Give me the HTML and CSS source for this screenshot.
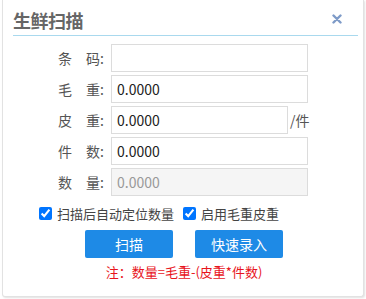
FILE: index.html
```html
<!DOCTYPE html>
<html lang="zh-CN">
<head>
<meta charset="utf-8">
<title>生鲜扫描</title>
<link rel="stylesheet" href="styles.css">
</head>
<body>
<div class="dialog">
  <div class="header">
    <span class="title">生鲜扫描</span>
    <svg class="close" width="10" height="10" viewBox="0 0 10 10"><path d="M1.5 1.5 L8.5 8.5 M8.5 1.5 L1.5 8.5" stroke="#7e9bc8" stroke-width="2.4" stroke-linecap="round"/></svg>
  </div>
  <div class="form">
    <div class="row"><label class="lbl">条&emsp;码:</label><input class="inp" type="text" value=""></div>
    <div class="row"><label class="lbl">毛&emsp;重:</label><input class="inp" type="text" value="0.0000"></div>
    <div class="row"><label class="lbl">皮&emsp;重:</label><input class="inp short" type="text" value="0.0000"><span class="unit">/件</span></div>
    <div class="row"><label class="lbl">件&emsp;数:</label><input class="inp" type="text" value="0.0000"></div>
    <div class="row"><label class="lbl">数&emsp;量:</label><input class="inp" type="text" value="0.0000" disabled></div>
  </div>
  <div class="checks">
    <label class="chk"><input type="checkbox" checked>扫描后自动定位数量</label>
    <label class="chk"><input type="checkbox" checked>启用毛重皮重</label>
  </div>
  <div class="buttons">
    <button class="btn">扫描</button>
    <button class="btn">快速录入</button>
  </div>
  <div class="note">注：数量=毛重-(皮重*件数)</div>
</div>
</body>
</html>
```
FILE: styles.css
```css
html, body {
  margin: 0;
  padding: 0;
  background: #ffffff;
}
body {
  font-family: "Noto Sans CJK SC", "Noto Sans", sans-serif;
  width: 366px;
  height: 299px;
  overflow: hidden;
}
.dialog {
  box-sizing: border-box;
  width: 362px;
  height: 297px;
  margin-left: 2px;
  background: #fff;
  border: 1px solid #e2e2e2;
  border-top: none;
  border-radius: 0 0 3px 3px;
  box-shadow: 1px 1px 2px rgba(0,0,0,0.12);
}
.header {
  margin: 0 5px 0 10px;
  height: 36px;
  border-bottom: 1px solid #a9d9ee;
  display: flex;
  align-items: center;
  justify-content: space-between;
  box-sizing: border-box;
  padding-top: 4px;
}
.title {
  font-size: 18px;
  font-weight: bold;
  color: #666;
  line-height: 22px;
  letter-spacing: -0.5px;
}
.close {
  margin-right: 16px;
  margin-top: -1px;
}
.form {
  margin-top: 8px;
  display: flex;
  flex-direction: column;
  gap: 3px;
}
.row {
  display: flex;
  align-items: center;
  height: 28px;
}
.lbl {
  width: 108px;
  text-align: right;
  font-size: 14px;
  color: #555;
  padding-right: 7px;
  box-sizing: border-box;
  margin-left: 0;
}
.inp {
  box-sizing: border-box;
  width: 197px;
  height: 28px;
  border: 1px solid #dcdcdc;
  padding: 0 0 0 5px;
  margin: 0;
  font-family: "Noto Sans CJK SC", "Noto Sans", sans-serif;
  font-size: 14px;
  color: #222;
  background: #fff;
  outline: none;
}
.inp.short {
  width: 177px;
}
.inp:disabled {
  background: #f5f5f5;
  color: #999;
}
.unit {
  font-size: 14px;
  color: #555;
  margin-left: 2px;
}
.checks {
  display: flex;
  align-items: center;
  gap: 9px;
  margin-top: 8px;
  padding-left: 36px;
  height: 18px;
}
.chk {
  display: flex;
  align-items: center;
  font-size: 13px;
  color: #444;
}
.chk input {
  width: 13px;
  height: 13px;
  margin: 0 5px 0 0;
}
.buttons {
  display: flex;
  justify-content: center;
  gap: 22px;
  margin-top: 8px;
  padding-left: 2px;
}
.btn {
  width: 88px;
  height: 28px;
  border: none;
  border-radius: 2px;
  background: #1e8ae6;
  color: #fff;
  font-family: "Noto Sans CJK SC", "Noto Sans", sans-serif;
  font-size: 14px;
  padding: 0;
}
.note {
  text-align: center;
  color: #e8141c;
  font-size: 13px;
  margin-top: 5px;
  padding-left: 2px;
  line-height: 18px;
}
```
